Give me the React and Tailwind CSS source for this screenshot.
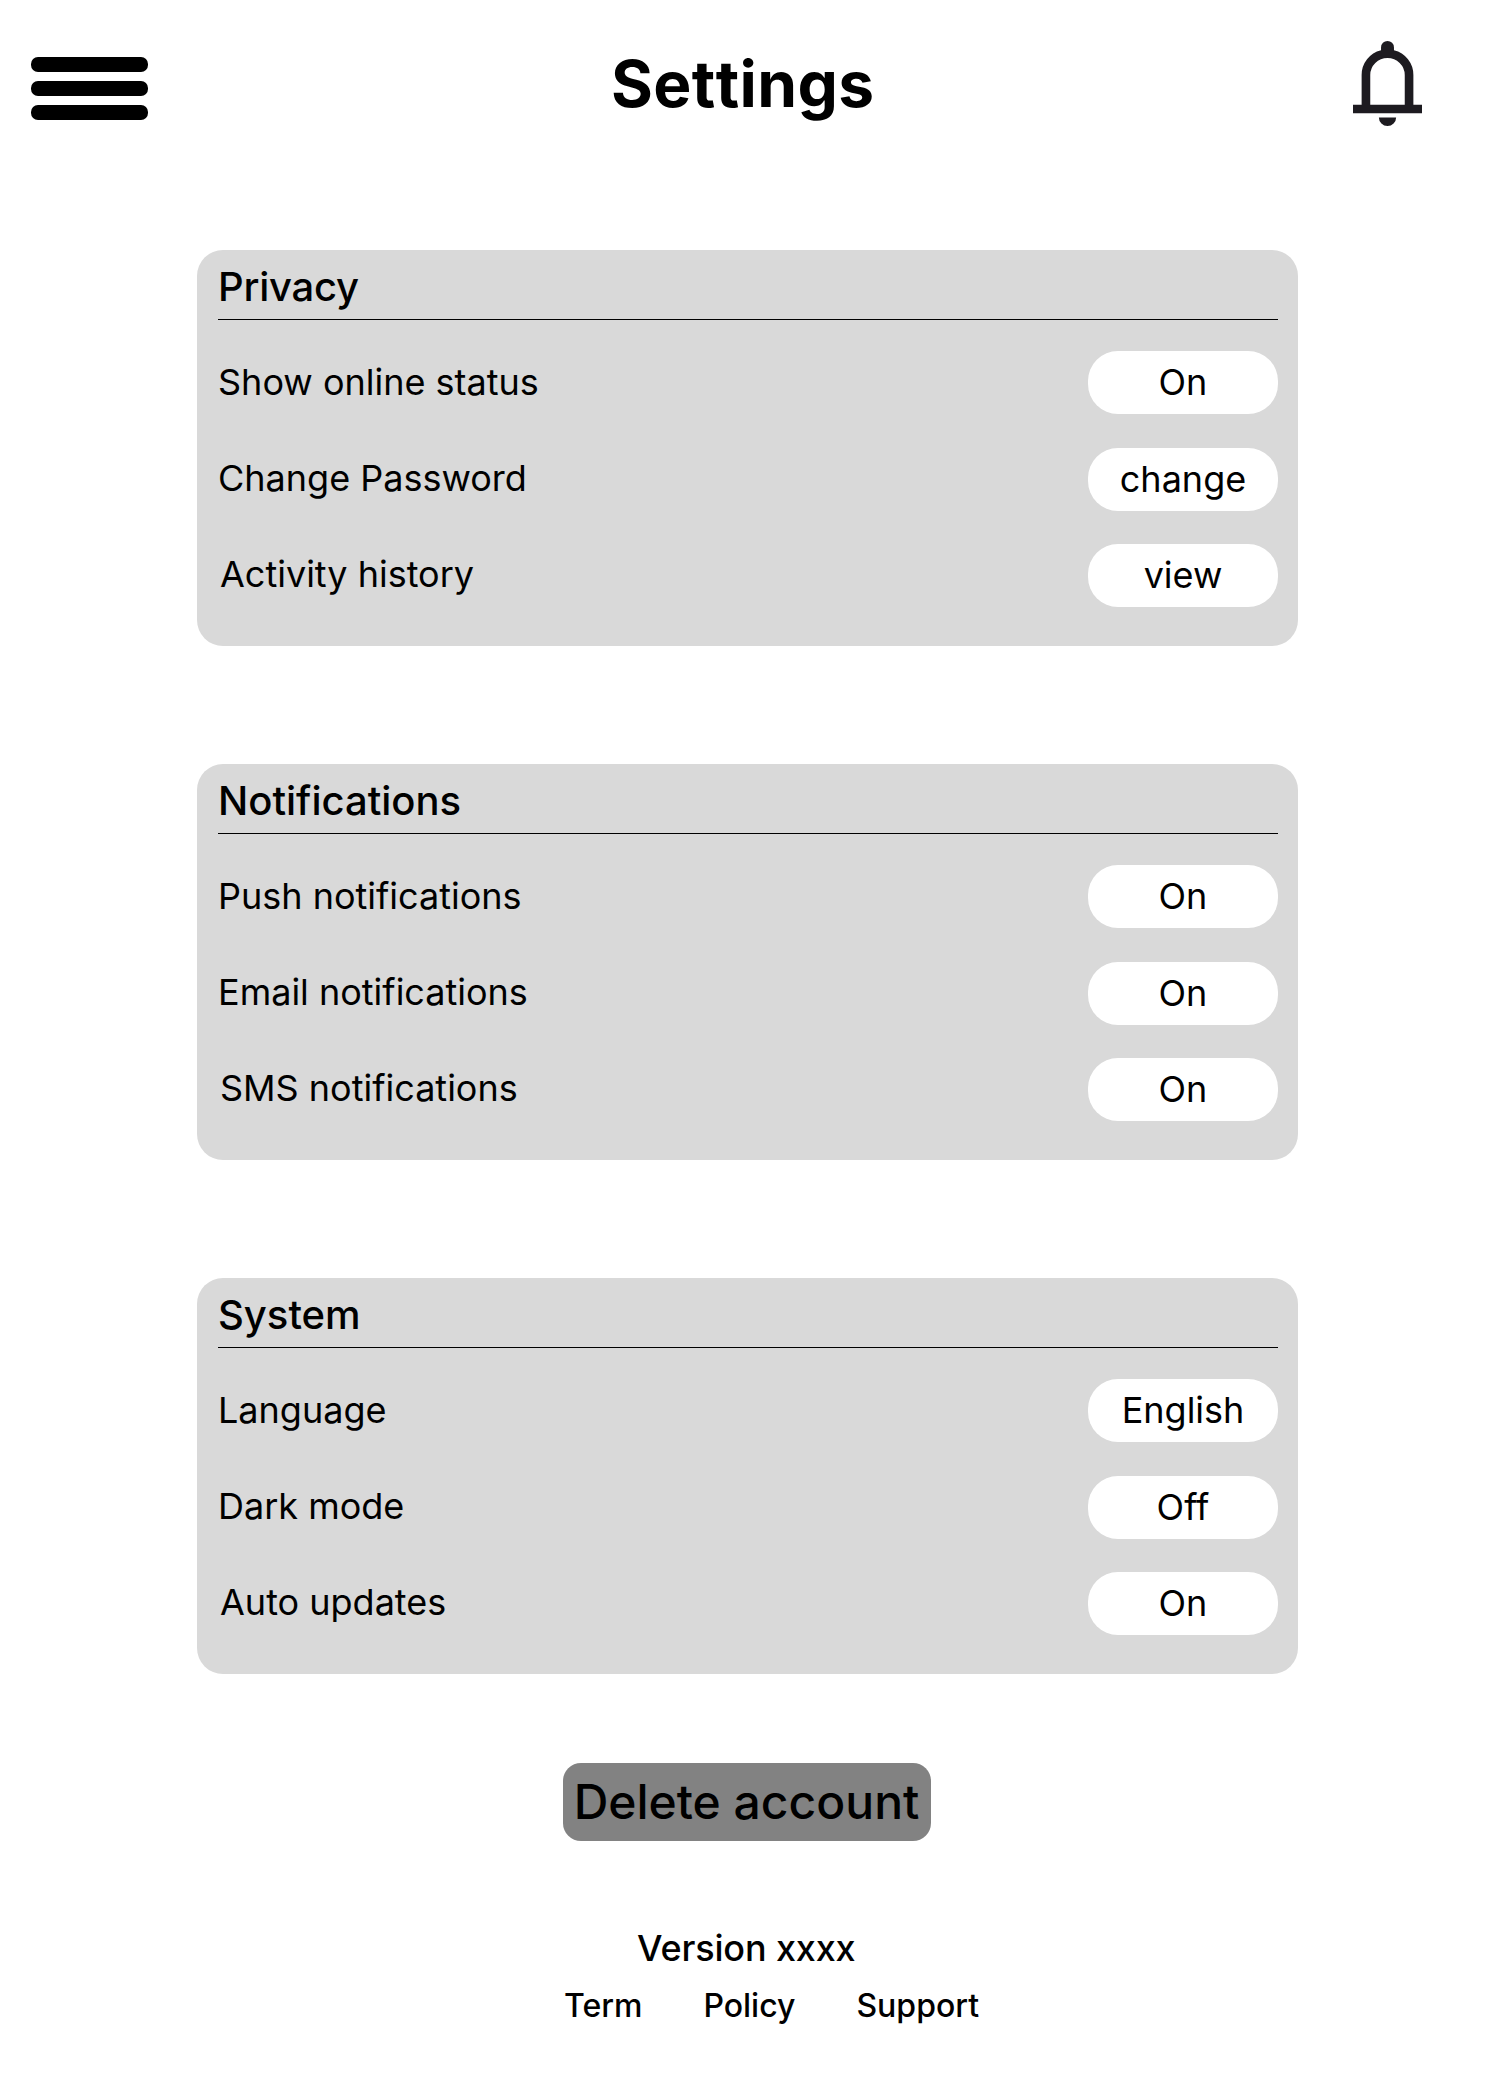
const sections = [
  { title: "Privacy", tracking: "tracking-[-0.25px]", rows: [["Show online status", "On"], ["Change Password", "change"], ["Activity history", "view"]] },
  { title: "Notifications", tracking: "tracking-normal", rows: [["Push notifications", "On"], ["Email notifications", "On"], ["SMS notifications", "On"]] },
  { title: "System", tracking: "tracking-normal", rows: [["Language", "English"], ["Dark mode", "Off"], ["Auto updates", "On"]] },
];

const pillOffsets = ["", "mt-[34px]", "mt-[33px]"];

function Section({ title, tracking, rows }) {
  return (
    <section className="h-[396px] rounded-[26px] bg-[#d9d9d9] pt-[13px] pr-[20px] pl-[21px]">
      <h2 className={`h-[57px] border-b border-black text-[40px] leading-[48px] font-medium ${tracking}`}>{title}</h2>
      <div className="flex justify-between pt-[31px]">
        <div className="flex flex-col gap-[52px] pt-[9px]">
          {rows.map(([label], i) => (
            <span key={label} className={i === 2 ? "pl-[2px]" : ""}>{label}</span>
          ))}
        </div>
        <div className="flex w-[190px] flex-col">
          {rows.map(([label, value], i) => (
            <button key={label} className={`h-[63px] rounded-[30px] bg-white pb-[1px] ${pillOffsets[i]}`}>{value}</button>
          ))}
        </div>
      </div>
    </section>
  );
}

export default function App() {
  return (
    <div className="h-[2090px] w-[1494px] overflow-hidden bg-white font-['Inter',sans-serif] text-[36px] leading-[44px] text-black">
      <header className="flex h-[250px] items-start pl-[31px]">
        <button aria-label="Menu" className="mt-[57px] flex w-[117px] flex-col gap-[9px]">
          <span className="h-[15px] w-full rounded-[7px] bg-black" />
          <span className="h-[15px] w-full rounded-[7px] bg-black" />
          <span className="h-[15px] w-full rounded-[7px] bg-black" />
        </button>
        <h1 className="mt-[45px] ml-[463px] w-[742px] text-[64px] leading-[77px] font-bold tracking-[0.4px] [font-feature-settings:'calt'_0,'kern'_0]">Settings</h1>
        <svg className="mt-[41px] shrink-0" width="69" height="85" viewBox="160 -880 640 800" preserveAspectRatio="none" fill="#1d1b20">
          <path d="M160-200v-80h80v-280q0-83 50-147.500T420-792v-28q0-25 17.500-42.500T480-880t42.500 17.500T540-820v28q80 20 130 84.500T720-560v280h80v80H160Zm320 120q-33 0-56.500-23.500T400-160h160q0 33-23.500 56.500T480-80ZM320-280h320v-280q0-66-47-113t-113-47q-66 0-113 47t-47 113v280Z" />
        </svg>
      </header>
      <main className="ml-[197px] flex w-[1101px] flex-col gap-[118px]">
        {sections.map((s) => <Section key={s.title} {...s} />)}
      </main>
      <footer>
        <button className="mt-[89px] ml-[563px] block h-[78px] w-[368px] rounded-[18px] bg-[#828282] pr-[1px] text-[48px] font-medium">Delete account</button>
        <p className="mt-[85px] ml-[637px] font-medium tracking-[-0.15px]">Version xxxx</p>
        <nav className="mt-[14px] ml-[564px] flex gap-[61px] text-[32px] font-medium"><a>Term</a><a>Policy</a><a>Support</a></nav>
      </footer>
    </div>
  );
}
